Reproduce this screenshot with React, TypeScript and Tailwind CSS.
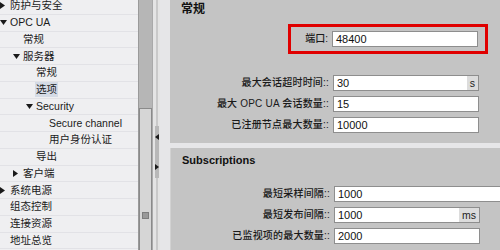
const cjk = { fontFamily: '"Liberation Sans", "Noto Sans CJK SC", sans-serif' };

type Node = { label: string; indent: number; arrow?: 'down' | 'right'; selected?: boolean };

const tree: Node[] = [
  { label: '防护与安全', indent: 0, arrow: 'right' },
  { label: 'OPC UA', indent: 0, arrow: 'down' },
  { label: '常规', indent: 1 },
  { label: '服务器', indent: 1, arrow: 'down' },
  { label: '常规', indent: 2 },
  { label: '选项', indent: 2, selected: true },
  { label: 'Security', indent: 2, arrow: 'down' },
  { label: 'Secure channel', indent: 3 },
  { label: '用户身份认证', indent: 3 },
  { label: '导出', indent: 2 },
  { label: '客户端', indent: 1, arrow: 'right' },
  { label: '系统电源', indent: 0, arrow: 'right' },
  { label: '组态控制', indent: 0 },
  { label: '连接资源', indent: 0 },
  { label: '地址总览', indent: 0 },
];

function Arrow({ dir }: { dir: 'down' | 'right' }) {
  return dir === 'down' ? (
    <svg width="7" height="5" viewBox="0 0 7 5" className="shrink-0">
      <path d="M0 0h7L3.5 5z" fill="#1a1a1a" />
    </svg>
  ) : (
    <svg width="5" height="7" viewBox="0 0 5 7" className="shrink-0">
      <path d="M0 0l5 3.5L0 7z" fill="#1a1a1a" />
    </svg>
  );
}

function TreeRow({ node }: { node: Node }) {
  const left = [9, 22, 35, 48][node.indent];
  return (
    <div className="relative flex items-center h-[16.75px] border-b border-[#e2e2e6] shrink-0" style={{ paddingLeft: left }}>
      {node.arrow && (
        <span className="absolute flex items-center" style={{ left: left - 9 }}>
          <Arrow dir={node.arrow} />
        </span>
      )}
      <span className={`text-[10.5px] leading-[15px] text-[#1a1a1a] px-[1px] ${node.selected ? 'bg-[#d5dbe5]' : ''}`}>{node.label}</span>
    </div>
  );
}

function Field({ value, unit, wide }: { value: string; unit?: string; wide?: boolean }) {
  return (
    <div className={`flex h-[16px] bg-white border border-[#8e8e8e] ${wide ? 'w-[172px]' : 'w-[146px]'}`}>
      <span className="flex-1 pl-[3px] text-[11px] leading-[14px] text-[#111]">{value}</span>
      {unit && <span className="bg-[#dcdcdc] px-[3px] text-[10.5px] leading-[14px] text-[#222]">{unit}</span>}
    </div>
  );
}

function Row({ label, value, unit, wide }: { label: string; value: string; unit?: string; wide?: boolean }) {
  return (
    <div className="flex items-center h-[15px]">
      <span className="w-[159px] text-right text-[10px] leading-[14px] font-medium text-[#1a1a1a] whitespace-nowrap tracking-[0.2px]">{label}</span>
      <span className="ml-[4px]">
        <Field value={value} unit={unit} wide={wide} />
      </span>
    </div>
  );
}

export default function App() {
  return (
    <div className="w-[500px] h-[250px] overflow-hidden flex bg-[#e6e6e8]" style={cjk}>
      {/* tree */}
      <div className="w-[138px] shrink-0 bg-[#efeff1] flex flex-col -mt-[2px] overflow-hidden">
        {tree.map((n, i) => (
          <TreeRow key={i} node={n} />
        ))}
      </div>

      {/* scrollbar */}
      <div className="w-[14px] shrink-0 bg-[#b6b6b6] border-l border-[#9a9a9a] flex flex-col">
        <div className="h-[108px]" />
        <div className="flex-1 bg-[#d6d6d6] border border-[#8a8a8a] border-b-0 flex flex-col items-center">
          <div className="h-[103px]" />
          <div className="w-[7px] h-[7px] bg-[#9a9a9a] border border-[#7e7e7e]" />
        </div>
      </div>

      {/* splitter */}
      <div className="w-[8px] shrink-0 bg-[#e4e4e4] border-l border-[#a9a9a9] flex flex-col items-center">
        <div className="w-[2px] h-full bg-[#c9c9c9] flex flex-col items-center">
          <div className="h-[126px]" />
          <div className="w-[4px] h-[52px] bg-[#b8b8b8] flex flex-col items-center justify-between py-[8px]">
            <svg width="4" height="6" viewBox="0 0 4 6"><path d="M4 0v6L0 3z" fill="#1a1a1a" /></svg>
            <svg width="4" height="6" viewBox="0 0 4 6"><path d="M0 0v6l4-3z" fill="#1a1a1a" /></svg>
          </div>
        </div>
      </div>

      {/* content */}
      <div className="flex-1 flex flex-col gap-[5px] pl-[10px] pr-[3px]">
        <div className="h-[143px] shrink-0 bg-[#c4c4c4] flex flex-col">
          <div className="h-[24px] pl-[11px] pt-[1px] text-[12px] leading-[16px] font-bold text-[#111]">常规</div>
          <div className="ml-[118px] w-[200px] h-[30px] border-[3px] border-[#e00000] flex items-center">
            <span className="w-[37px] text-right text-[10px] leading-[14px] font-medium text-[#1a1a1a]">端口:</span>
            <span className="ml-[4px]">
              <Field value="48400" />
            </span>
          </div>
          <div className="mt-[21px] flex flex-col gap-[6px]">
            <Row label="最大会话超时时间::" value="30" unit="s" />
            <Row label="最大 OPC UA 会话数量::" value="15" />
            <Row label="已注册节点最大数量::" value="10000" />
          </div>
        </div>
        <div className="flex-1 bg-[#c4c4c4] border-l border-[#d2d2d2] flex flex-col">
          <div className="h-[38px] pl-[11px] pt-[4px] text-[11px] leading-[16px] font-bold text-[#111]">Subscriptions</div>
          <div className="flex flex-col gap-[6px]">
            <Row label="最短采样间隔::" value="1000" wide />
            <Row label="最短发布间隔::" value="1000" unit="ms" />
            <Row label="已监视项的最大数量::" value="2000" />
          </div>
        </div>
      </div>
    </div>
  );
}
